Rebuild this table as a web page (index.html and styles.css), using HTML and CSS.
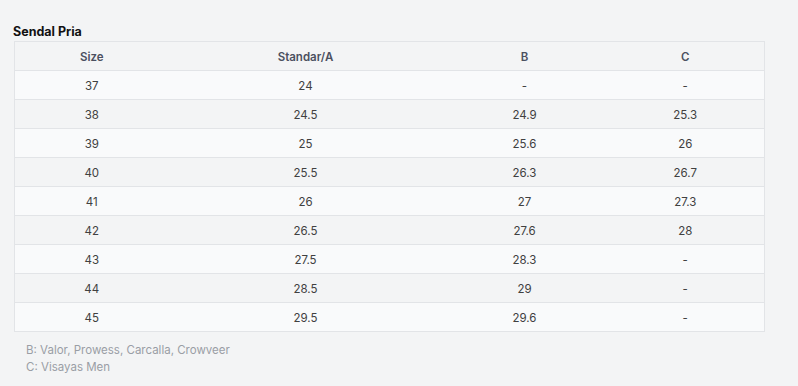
FILE: index.html
```html
<!DOCTYPE html>
<html>
<head>
<meta charset="utf-8">
<link rel="stylesheet" href="styles.css">
</head>
<body>
<div class="wrap">
  <h2 class="title">Sendal Pria</h2>
  <table class="size-table">
    <colgroup>
      <col class="c1"><col class="c2"><col class="c3"><col class="c4">
    </colgroup>
    <thead>
      <tr><th>Size</th><th>Standar/A</th><th>B</th><th>C</th></tr>
    </thead>
    <tbody>
      <tr><td>37</td><td>24</td><td>-</td><td>-</td></tr>
      <tr><td>38</td><td>24.5</td><td>24.9</td><td>25.3</td></tr>
      <tr><td>39</td><td>25</td><td>25.6</td><td>26</td></tr>
      <tr><td>40</td><td>25.5</td><td>26.3</td><td>26.7</td></tr>
      <tr><td>41</td><td>26</td><td>27</td><td>27.3</td></tr>
      <tr><td>42</td><td>26.5</td><td>27.6</td><td>28</td></tr>
      <tr><td>43</td><td>27.5</td><td>28.3</td><td>-</td></tr>
      <tr><td>44</td><td>28.5</td><td>29</td><td>-</td></tr>
      <tr><td>45</td><td>29.5</td><td>29.6</td><td>-</td></tr>
    </tbody>
  </table>
  <div class="notes">
    <p>B: Valor, Prowess, Carcalla, Crowveer</p>
    <p>C: Visayas Men</p>
  </div>
</div>
</body>
</html>
```
FILE: styles.css
```css
html, body {
  margin: 0;
  padding: 0;
  background: #f3f4f5;
  font-family: Inter, "Noto Sans", sans-serif;
}
.wrap {
  padding: 24px 34px 0 13px;
}
.title {
  margin: 0 0 1px 0;
  font-size: 12.5px;
  font-weight: 700;
  color: #111;
  line-height: 16px;
}
.size-table {
  width: 750px;
  margin-left: 1px;
  border-collapse: collapse;
  border: 1px solid #e2e4e7;
  table-layout: fixed;
  font-size: 11.5px;
}
.c1 { width: 154px; }
.c2 { width: 274px; }
.c3 { width: 164px; }
.c4 { width: 158px; }
.size-table th {
  background: #f3f4f5;
  color: #4b5060;
  font-weight: 600;
  height: 27px;
  padding: 1px 0 0 0;
  text-align: center;
  border-bottom: 1px solid #e2e4e7;
}
.size-table td {
  height: 27px;
  padding: 1px 0 0 0;
  text-align: center;
  color: #404040;
  border-bottom: 1px solid #e2e4e7;
}
.size-table tbody tr:nth-child(odd) td { background: #f9fafb; }
.size-table tbody tr:nth-child(even) td { background: #f3f4f5; }
.notes {
  padding: 10px 0 0 13px;
  color: #9a9ea5;
  font-size: 11.5px;
  line-height: 17px;
}
.notes p { margin: 0; }
```
